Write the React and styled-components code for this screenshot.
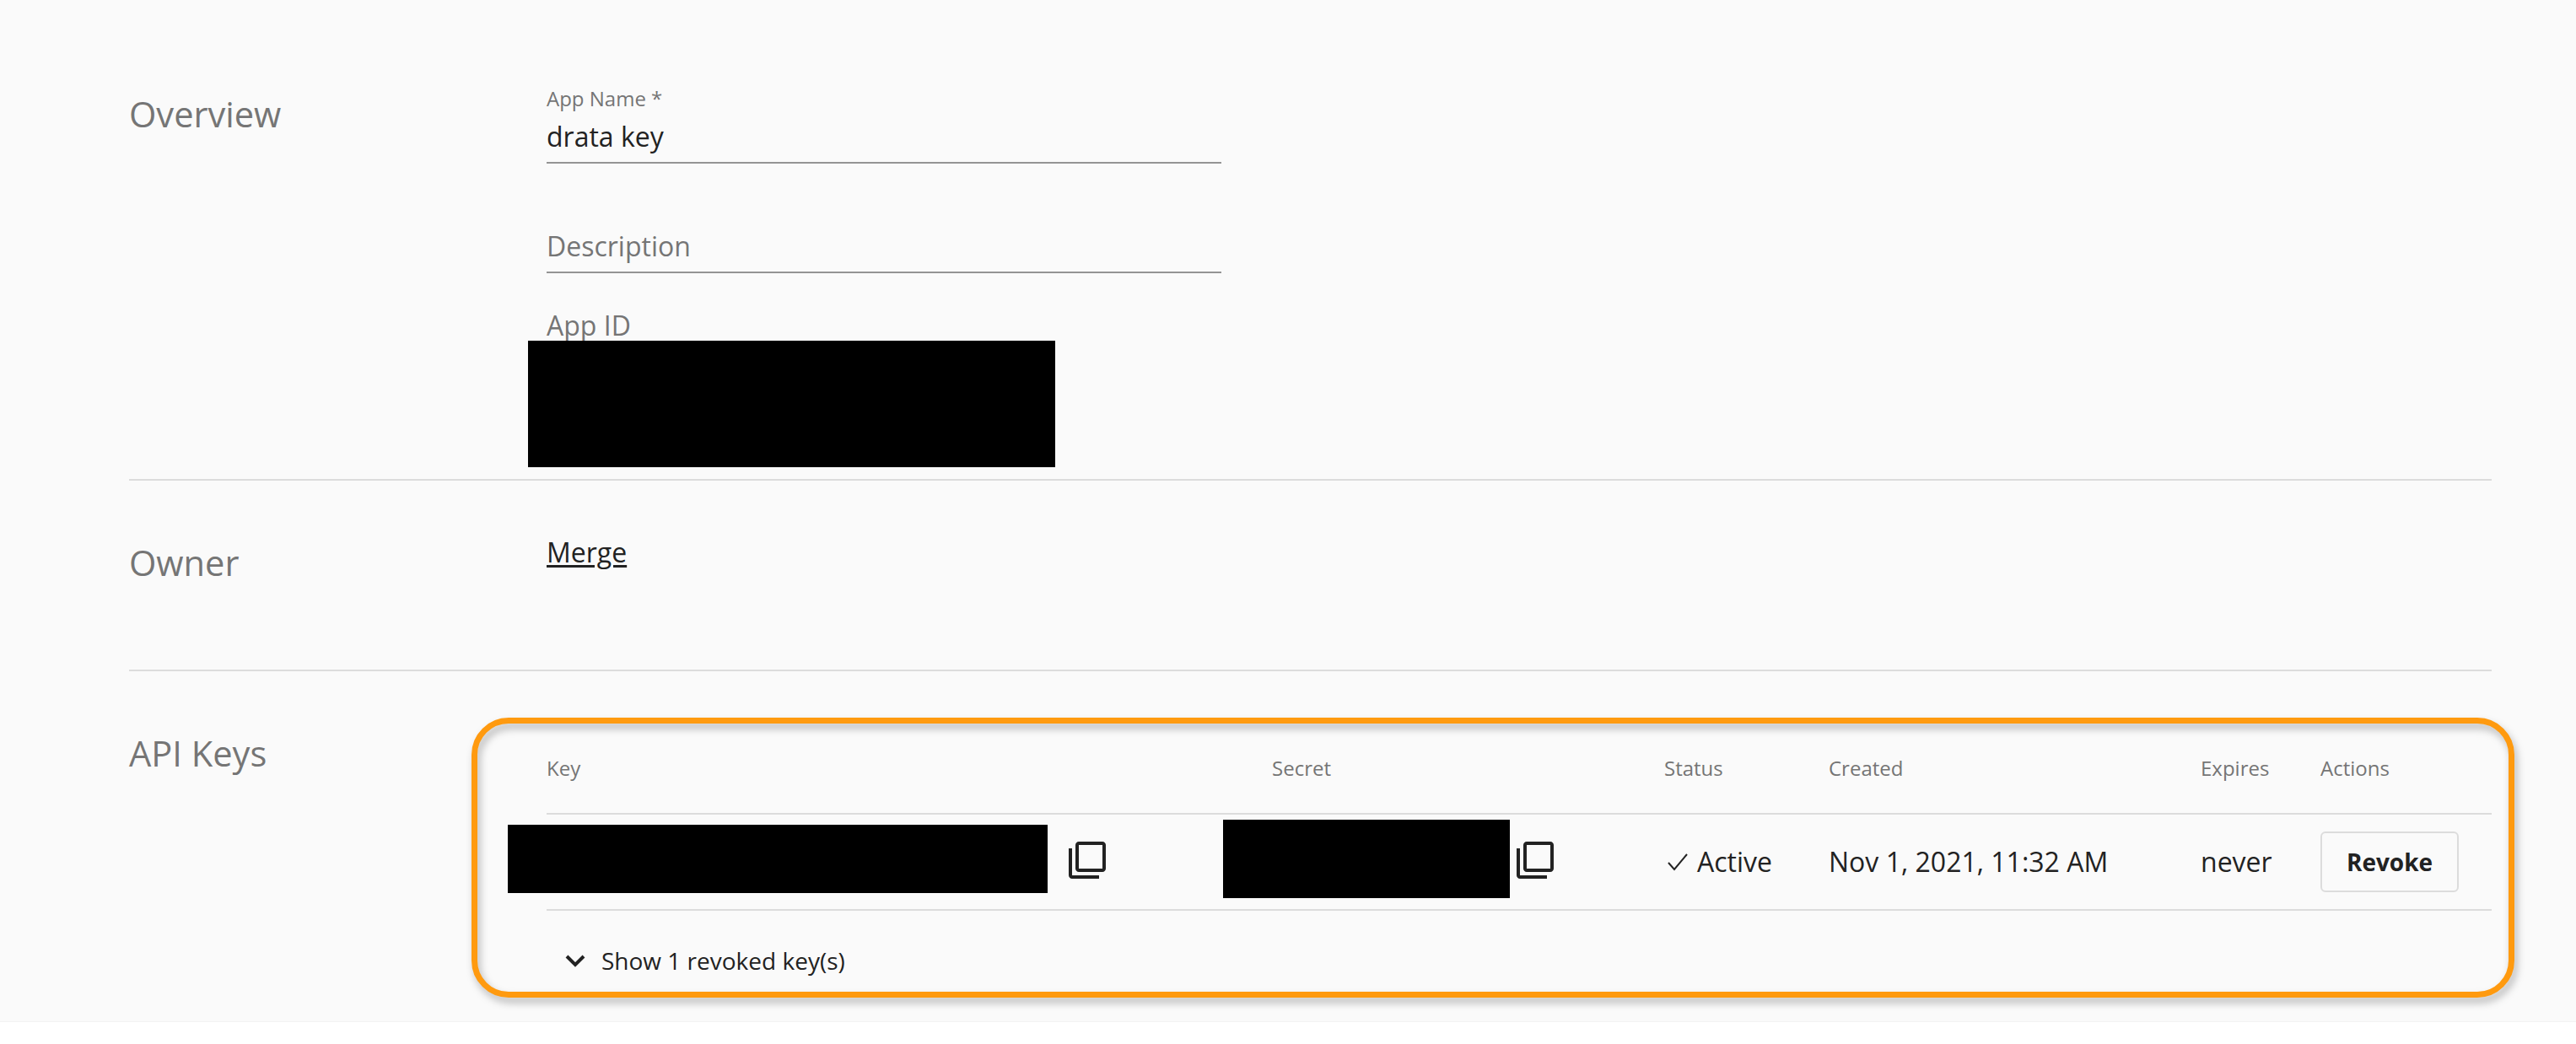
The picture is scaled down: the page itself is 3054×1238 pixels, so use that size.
import React from 'react'
import styled, { createGlobalStyle } from 'styled-components'

const Global = createGlobalStyle`
  html, body { margin: 0; padding: 0; background: #fff; }
  body { font-family: "Open Sans", "Liberation Sans", sans-serif; color: #222; }
`

const Page = styled.div`
  height: 1212px;
  box-sizing: border-box;
  background: #fafafa;
  border-bottom: 1px solid #f3f3f3;
  padding: 0 100px 0 153px;
  overflow: hidden;
`

const Section = styled.section`
  display: grid;
  grid-template-columns: 495px 1fr;
  height: ${p => p.$height}px;
  box-sizing: border-box;
  border-bottom: ${p => (p.$last ? 'none' : '2px solid #dcdcdc')};
  position: relative;
`

const Heading = styled.h2`
  margin: 0;
  padding-top: ${p => p.$top}px;
  font-size: 41.6px;
  line-height: 54px;
  font-weight: 400;
  color: #757575;
`

const Fields = styled.div`
  display: flex;
  flex-direction: column;
  padding-top: 98px;
  width: 800px;
`

const Field = styled.div`
  height: ${p => p.$height}px;
  box-sizing: border-box;
  border-bottom: 2px solid #949494;
  display: flex;
  flex-direction: column;
  justify-content: flex-end;
  padding-bottom: 9px;
`

const SmallLabel = styled.label`
  font-size: 24px;
  line-height: 32px;
  margin-bottom: 8px;
  color: #757575;
`

const FieldValue = styled.div`
  font-size: 32px;
  line-height: 42px;
  color: ${p => (p.$muted ? '#757575' : '#222')};
`

const AppId = styled.div`
  position: relative;
  margin-top: 41px;
  font-size: 32px;
  line-height: 42px;
  color: #757575;
`

const Redaction = styled.div`
  position: absolute;
  background: #000;
  left: ${p => p.$left}px;
  top: ${p => p.$top}px;
  width: ${p => p.$width}px;
  height: ${p => p.$height}px;
`

const OwnerLink = styled.a`
  display: block;
  margin-top: 64px;
  font-size: 32px;
  line-height: 42px;
  color: #222;
  text-decoration: underline;
  text-decoration-thickness: 3px;
  text-underline-offset: 3px;
`

const Table = styled.div`
  display: flex;
  flex-direction: column;
`

const TableGrid = styled.div`
  display: grid;
  grid-template-columns: 860px 465px 195px 441px 142px 1fr;
  align-items: center;
  height: ${p => p.$height}px;
  box-sizing: border-box;
  border-bottom: 2px solid #dcdcdc;
`

const HeadCell = styled.div`
  font-size: 24px;
  line-height: 32px;
  color: #757575;
  padding-top: 62px;
`

const Cell = styled.div`
  position: relative;
  font-size: 32px;
  line-height: 42px;
  color: #222;
  height: 42px;
`

const CopyIcon = styled.svg`
  position: absolute;
  left: ${p => p.$left}px;
  top: -5px;
  width: 48px;
  height: 48px;
  fill: #222;
`

const StatusCell = styled(Cell)`
  display: flex;
  align-items: center;
  gap: 10px;
  padding-left: 3px;
`

const RevokeButton = styled.button`
  width: 164px;
  height: 72px;
  box-sizing: border-box;
  background: #fafafa;
  border: 2px solid #dcdcdc;
  border-radius: 6px;
  font-family: inherit;
  font-size: 28px;
  font-weight: 700;
  color: #222;
  padding: 0;
`

const Toggle = styled.div`
  display: flex;
  align-items: center;
  gap: 19px;
  margin-top: 40px;
  padding-left: 22px;
  font-size: 28px;
  line-height: 38px;
  color: #222;
`

const Highlight = styled.div`
  position: absolute;
  left: 406px;
  top: 55px;
  width: 2422px;
  height: 332px;
  box-sizing: border-box;
  border: 7px solid #ff9a0f;
  border-radius: 44px;
  filter: drop-shadow(3px 6px 5px rgba(0, 0, 0, 0.28));
  pointer-events: none;
`

function Copy({ left }) {
  return (
    <CopyIcon $left={left} viewBox="0 0 24 24">
      <path d="M3 5H1v16c0 1.1.9 2 2 2h16v-2H3V5zm18-4H7c-1.1 0-2 .9-2 2v14c0 1.1.9 2 2 2h14c1.1 0 2-.9 2-2V3c0-1.1-.9-2-2-2zm0 16H7V3h14v14z" />
    </CopyIcon>
  )
}

export default function App() {
  return (
    <Page>
      <Global />
      <Section $height={570}>
        <Heading $top={108}>Overview</Heading>
        <Fields>
          <Field $height={96}>
            <SmallLabel>App Name *</SmallLabel>
            <FieldValue>drata key</FieldValue>
          </Field>
          <Field $height={130}>
            <FieldValue $muted>Description</FieldValue>
          </Field>
          <AppId>
            App ID
            <Redaction $left={-22} $top={39} $width={625} $height={150} />
          </AppId>
        </Fields>
      </Section>
      <Section $height={226}>
        <Heading $top={70}>Owner</Heading>
        <OwnerLink href="#">Merge</OwnerLink>
      </Section>
      <Section $height={416} $last>
        <Heading $top={70}>API Keys</Heading>
        <Table>
          <TableGrid $height={170}>
            <HeadCell>Key</HeadCell>
            <HeadCell>Secret</HeadCell>
            <HeadCell>Status</HeadCell>
            <HeadCell>Created</HeadCell>
            <HeadCell>Expires</HeadCell>
            <HeadCell>Actions</HeadCell>
          </TableGrid>
          <TableGrid $height={114}>
            <Cell>
              <Redaction $left={-46} $top={-23} $width={640} $height={81} />
              <Copy left={617} />
            </Cell>
            <Cell>
              <Redaction $left={-58} $top={-29} $width={340} $height={93} />
              <Copy left={288} />
            </Cell>
            <StatusCell>
              <svg width="26" height="22" viewBox="0 0 26 22" fill="none" stroke="#222" strokeWidth="2">
                <path d="M2 12l7 8L24 2" />
              </svg>
              Active
            </StatusCell>
            <Cell>Nov 1, 2021, 11:32 AM</Cell>
            <Cell>never</Cell>
            <RevokeButton>Revoke</RevokeButton>
          </TableGrid>
          <Toggle>
            <svg width="24" height="24" viewBox="0 0 24 24" fill="none" stroke="#222" strokeWidth="4">
              <path d="M2 7l10 10L22 7" />
            </svg>
            Show 1 revoked key(s)
          </Toggle>
        </Table>
        <Highlight />
      </Section>
    </Page>
  )
}
